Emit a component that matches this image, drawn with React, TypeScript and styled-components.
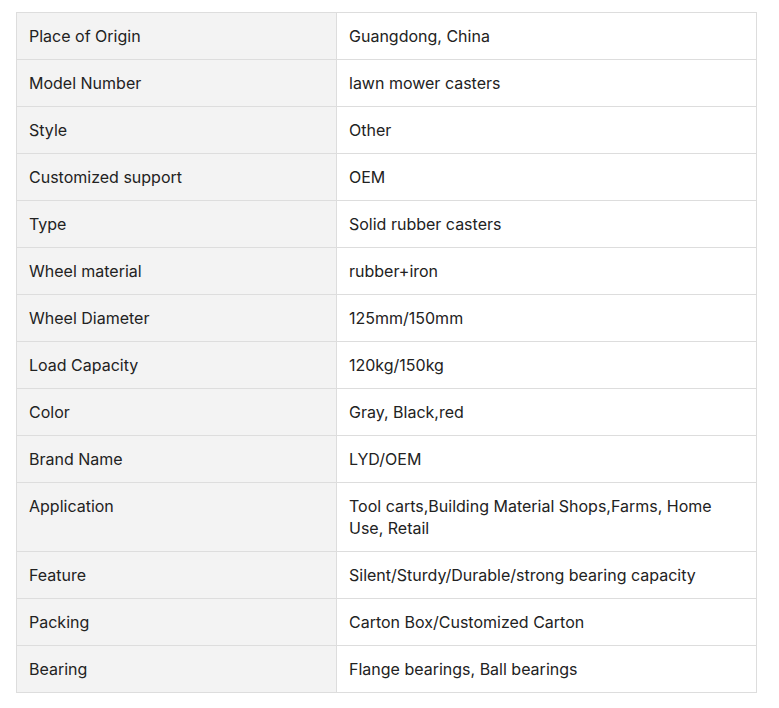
import React from "react";
import styled, { createGlobalStyle } from "styled-components";

const Global = createGlobalStyle`
  html, body { margin: 0; padding: 0; background: #ffffff; }
  body { font-family: Inter, "Noto Sans", sans-serif; }
`;

const Wrap = styled.div`
  padding: 12px 0 0 16px;
`;

const Table = styled.table`
  width: 741px;
  border-collapse: collapse;
  table-layout: fixed;
  font-family: Inter, "Noto Sans", sans-serif;
  font-size: 16px;
  line-height: 22px;
  color: #222222;
`;

const Row = styled.tr``;

const Cell = styled.td<{ $label?: boolean }>`
  border: 1px solid #dddddd;
  padding: 12px 12px;
  vertical-align: top;
  background: ${(p) => (p.$label ? "#f3f3f3" : "#ffffff")};
`;

const rows: [string, string][] = [
  ["Place of Origin", "Guangdong, China"],
  ["Model Number", "lawn mower casters"],
  ["Style", "Other"],
  ["Customized support", "OEM"],
  ["Type", "Solid rubber casters"],
  ["Wheel material", "rubber+iron"],
  ["Wheel Diameter", "125mm/150mm"],
  ["Load Capacity", "120kg/150kg"],
  ["Color", "Gray, Black,red"],
  ["Brand Name", "LYD/OEM"],
  ["Application", "Tool carts,Building Material Shops,Farms, Home Use, Retail"],
  ["Feature", "Silent/Sturdy/Durable/strong bearing capacity"],
  ["Packing", "Carton Box/Customized Carton"],
  ["Bearing", "Flange bearings, Ball bearings"],
];

export default function App() {
  return (
    <>
      <Global />
      <Wrap>
        <Table>
          <colgroup>
            <col style={{ width: 320 }} />
            <col />
          </colgroup>
          <tbody>
            {rows.map(([k, v]) => (
              <Row key={k}>
                <Cell $label>{k}</Cell>
                <Cell>{v}</Cell>
              </Row>
            ))}
          </tbody>
        </Table>
      </Wrap>
    </>
  );
}
